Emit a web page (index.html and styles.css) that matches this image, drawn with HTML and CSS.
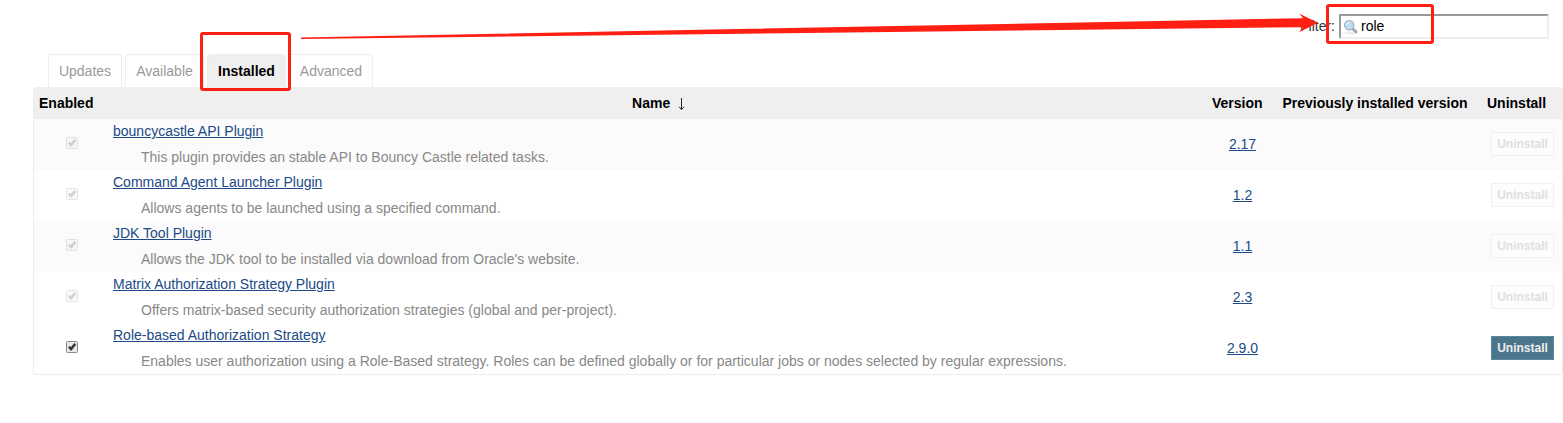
FILE: index.html
```html
<!DOCTYPE html>
<html lang="en">
<head>
<meta charset="utf-8">
<title>Plugin Manager</title>
<link rel="stylesheet" href="styles.css">
</head>
<body>
<svg class="defs" width="0" height="0">
  <symbol id="check" viewBox="0 0 12 12">
    <rect class="check-box" x=".5" y=".5" width="11" height="11" rx="1"/>
    <path class="check-mark" d="M2.3 6.3 3.6 5.2 5 6.3 8.3 2.2 10 3.6 5.6 9.2H4.4Z"/>
  </symbol>
</svg>
<form class="filter">
  <label class="filter-label">Filter:</label>
  <div class="search">
    <svg class="search-icon" width="16" height="16" viewBox="0 0 16 16">
      <ellipse cx="7.5" cy="14" rx="6.5" ry="1.6" fill="#ececec"/>
      <path d="M10 10 13.3 13" stroke="#a3a3ab" stroke-width="2.6" stroke-linecap="round"/>
      <circle cx="6.2" cy="6.2" r="4.6" fill="#bcdcf5" stroke="#a5b0c0" stroke-width="1.3"/>
      <path d="M3.6 6.2A2.8 2.8 0 0 1 6.7 3.4" fill="none" stroke="#eef8ff" stroke-width="1.2"/>
    </svg>
    <span class="query">role</span>
  </div>
</form>
<nav class="tabs">
  <a class="tab updates">Updates</a>
  <a class="tab available">Available</a>
  <a class="tab active">Installed</a>
  <a class="tab advanced">Advanced</a>
</nav>
<main class="plugins">
  <div class="row head">
    <b class="head-enabled">Enabled</b><b class="cell">Name &nbsp;<svg class="sort" width="7" height="13" viewBox="0 0 7 13"><path d="M3.5 0V11M1 8.7 3.5 11.6 6 8.7"/></svg></b><b class="head-version">Version</b><b class="cell">Previously installed version</b><b class="head-uninstall">Uninstall</b>
  </div>
  <div class="row odd">
    <svg class="check disabled"><use href="#check"/></svg>
    <div class="info"><a class="link">bouncycastle API Plugin</a><p class="desc">This plugin provides an stable API to Bouncy Castle related tasks.</p></div>
    <div class="cell version"><a class="link">2.17</a></div><div></div>
    <button class="button" disabled>Uninstall</button>
  </div>
  <div class="row">
    <svg class="check disabled"><use href="#check"/></svg>
    <div class="info"><a class="link">Command Agent Launcher Plugin</a><p class="desc">Allows agents to be launched using a specified command.</p></div>
    <div class="cell version"><a class="link">1.2</a></div><div></div>
    <button class="button" disabled>Uninstall</button>
  </div>
  <div class="row odd">
    <svg class="check disabled"><use href="#check"/></svg>
    <div class="info"><a class="link">JDK Tool Plugin</a><p class="desc">Allows the JDK tool to be installed via download from Oracle's website.</p></div>
    <div class="cell version"><a class="link">1.1</a></div><div></div>
    <button class="button" disabled>Uninstall</button>
  </div>
  <div class="row">
    <svg class="check disabled"><use href="#check"/></svg>
    <div class="info"><a class="link">Matrix Authorization Strategy Plugin</a><p class="desc">Offers matrix-based security authorization strategies (global and per-project).</p></div>
    <div class="cell version"><a class="link">2.3</a></div><div></div>
    <button class="button" disabled>Uninstall</button>
  </div>
  <div class="row">
    <svg class="check"><use href="#check"/></svg>
    <div class="info"><a class="link">Role-based Authorization Strategy</a><p class="desc">Enables user authorization using a Role-Based strategy. Roles can be defined globally or for particular jobs or nodes selected by regular expressions.</p></div>
    <div class="cell version"><a class="link">2.9.0</a></div><div></div>
    <button class="button">Uninstall</button>
  </div>
</main>
<svg class="annotations" width="1563" height="423" viewBox="0 0 1563 423">
  <rect class="outline" x="201.5" y="33.5" width="88" height="56" rx="1.5"/>
  <rect class="outline" x="1327.5" y="5.5" width="105" height="37" rx="1.5"/>
  <path class="arrow" d="M301 37.5 1303 18.2 1299.5 13.8 1318 22.8 1299 32.3 1303 27.2 301 39Z"/>
</svg>
</body>
</html>
```
FILE: styles.css
```css
* { box-sizing: border-box; }

body {
  margin: 0;
  width: 1563px;
  height: 423px;
  overflow: hidden;
  background: #fff;
  color: #000;
  font: 14px/20px "Liberation Sans", Arial, sans-serif;
}

.defs { display: block; }

.filter {
  display: flex;
  justify-content: flex-end;
  height: 54px;
  padding: 14px 14px 0 0;
}

.filter-label { margin: 2px 4px 0 0; color: #333; }

.search {
  display: flex;
  align-items: center;
  gap: 2px;
  width: 210px;
  height: 25px;
  padding-left: 2px;
  border: 2px solid;
  border-color: #999 #eee #eee #999;
}

.query { margin-bottom: 2px; }

.tabs {
  display: flex;
  gap: 3px;
  height: 33px;
  padding-left: 48px;
}

.tab {
  padding-top: 6px;
  border: 1px solid #eee;
  border-bottom: 0;
  border-radius: 4px 4px 0 0;
  color: #999;
  text-align: center;
}

.updates { width: 74px; }
.available { width: 79px; }
.tab.active { width: 79px; background: #efefef; color: #000; font-weight: bold; }
.advanced { width: 84px; }

.plugins {
  width: 1530px;
  margin-left: 33px;
  border: 1px solid #eee;
  border-top: 0;
  border-radius: 4px;
  overflow: hidden;
}

.row {
  display: grid;
  grid-template-columns: 76px 1097px 70px 196px 1fr;
  align-items: center;
  height: 51px;
}

.head { height: 32px; background: #efefef; }
.odd { background: #fbfbfb; }
.cell { text-align: center; }
.version { padding: 0 0 2px 1px; }
.head-enabled { padding-left: 5px; }
.head-version { padding-left: 5px; }
.head-uninstall { padding-left: 14px; }

.sort {
  vertical-align: -3px;
  fill: none;
  stroke: #222;
}

.check {
  width: 12px;
  height: 12px;
  margin: 0 0 3px 32px;
}

.disabled { opacity: .22; }
.check-box { fill: #e8e8e8; stroke: #888; }
.check-mark { fill: #333; stroke: #333; stroke-width: .4; }

.info { align-self: start; padding: 2px 0 0 3px; }
.info .link { display: block; width: max-content; }
.link { color: #204a87; text-decoration: underline; }
.desc { margin: 6px 0 0 28px; color: #888; }

.button {
  width: 63px;
  height: 24px;
  margin: 0 0 1px 18px;
  padding: 0;
  border: 1px solid #5788a0;
  background: #4b758b;
  color: #eee;
  font: bold 12px "Liberation Sans", Arial, sans-serif;
}

.button:disabled { border-color: #f0f0f0; background: #fdfdfd; color: #e0e0e0; }

.annotations { position: absolute; top: 0; left: 0; }
.outline { fill: none; stroke: #ff1f13; stroke-width: 3; }
.arrow { fill: #ff1f13; }
```
